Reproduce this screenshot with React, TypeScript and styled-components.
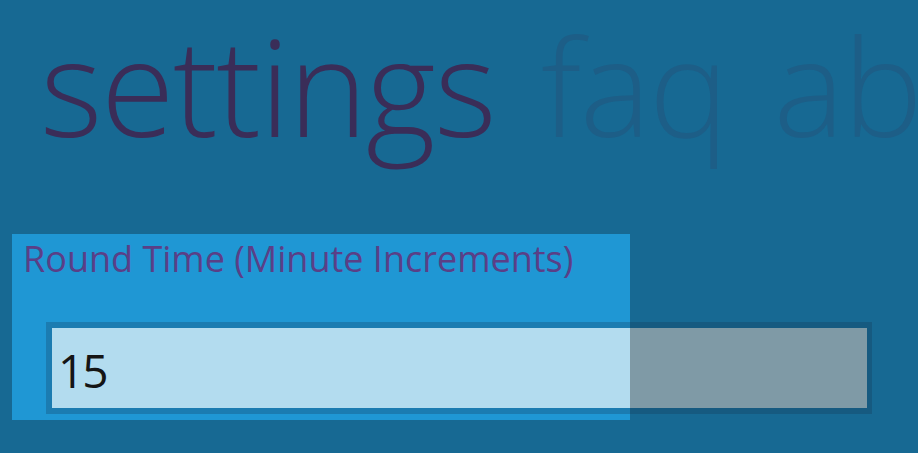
import styled, { createGlobalStyle } from "styled-components";

const GlobalStyle = createGlobalStyle`
    html, body {
        margin: 0;
        padding: 0;
        background: #176993;
        overflow: hidden;
    }
    body {
        font-family: "Open Sans", "Noto Sans", "Liberation Sans", sans-serif;
    }
`;

const tabs = [
    { label: "settings", active: true },
    { label: "faq", active: false },
    { label: "about", active: false },
];

export default function App() {
    return (
        <>
            <GlobalStyle />
            <Page>
                <PivotHeader>
                    {tabs.map((tab) => (
                        <PivotItem key={tab.label} $active={tab.active}>
                            {tab.label}
                        </PivotItem>
                    ))}
                </PivotHeader>
                <FieldPanel>
                    <FieldLabel>Round Time (Minute Increments)</FieldLabel>
                    <InputFrame>
                        <TextInput defaultValue="15" />
                    </InputFrame>
                </FieldPanel>
            </Page>
        </>
    );
}

const Page = styled.div`
    width: 918px;
    height: 453px;
    display: flex;
    flex-direction: column;
    overflow: hidden;
`;

const PivotHeader = styled.div`
    display: flex;
    gap: 46px;
    padding-left: 40px;
    height: 170px;
    white-space: nowrap;
    font-size: 134px;
    line-height: 170px;
    font-weight: 350;
    letter-spacing: -1.5px;
`;

const PivotItem = styled.span<{ $active: boolean }>`
    flex-shrink: 0;
    color: ${({ $active }) => ($active ? "#3a2d58" : "#1d5e87")};
`;

const FieldPanel = styled.div`
    width: 618px;
    margin: 64px 0 0 12px;
    padding: 5px 0 6px 11px;
    box-sizing: border-box;
    background: #1f97d4;
    display: flex;
    flex-direction: column;
    gap: 43px;
`;

const FieldLabel = styled.div`
    font-size: 36px;
    line-height: 40px;
    color: #5a3f87;
    white-space: nowrap;
`;

const InputFrame = styled.div`
    width: 826px;
    margin-left: 23px;
    padding: 6px 5px 6px 6px;
    box-sizing: border-box;
    background: linear-gradient(to right, #1b7cb1 0 584px, #165a80 584px);
`;

const TextInput = styled.input`
    display: block;
    width: 100%;
    height: 80px;
    box-sizing: border-box;
    border: none;
    outline: none;
    padding: 3px 0 0 6px;
    margin: 0;
    font-family: "Open Sans", "Noto Sans", sans-serif;
    font-size: 46px;
    letter-spacing: -2px;
    color: #151515;
    background: linear-gradient(to right, #b3dcef 0 578px, #7f9aa6 578px);
`;
